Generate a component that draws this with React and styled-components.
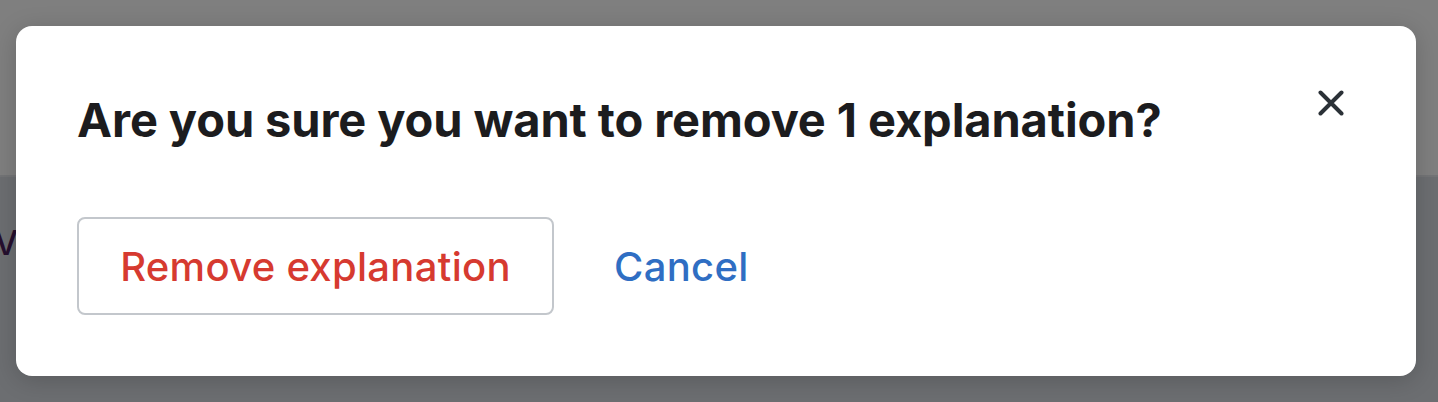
import styled, { createGlobalStyle } from "styled-components";

const GlobalStyle = createGlobalStyle`
  html, body {
    margin: 0;
    padding: 0;
    width: 100%;
    height: 100%;
    overflow: hidden;
  }
  #root {
    height: 100%;
  }
`;

const Page = styled.div`
  position: relative;
  width: 100%;
  height: 100%;
  display: flex;
  flex-direction: column;
  background: #d9dce3;
  font-family: Inter, "Liberation Sans", sans-serif;
`;

const PageHeader = styled.div`
  height: 175px;
  background: #ffffff;
  border-bottom: 2px solid #e6e8ec;
`;

const PageBody = styled.div`
  flex: 1;
  padding-top: 46px;
`;

const PeekLetter = styled.span`
  display: block;
  margin-left: -6px;
  font-size: 34px;
  line-height: 40px;
  font-weight: 500;
  color: #4a1f5c;
`;

const Overlay = styled.div`
  position: absolute;
  inset: 0;
  background: rgba(0, 0, 0, 0.5);
  padding: 26px 22px 26px 16px;
`;

const Dialog = styled.div`
  position: relative;
  background: #ffffff;
  border-radius: 16px;
  box-shadow: 0 4px 24px rgba(0, 0, 0, 0.18);
  padding: 66px 62px 60px 61px;
  height: 350px;
  box-sizing: border-box;
  display: flex;
  flex-direction: column;
`;

const Title = styled.h2`
  margin: 0;
  font-size: 47px;
  line-height: 56px;
  font-weight: 700;
  color: #1c1c1e;
  letter-spacing: -0.1px;
`;

const CloseButton = styled.button`
  position: absolute;
  top: 62px;
  right: 70px;
  width: 30px;
  height: 30px;
  padding: 0;
  border: none;
  background: none;
  display: flex;
  align-items: center;
  justify-content: center;
  cursor: pointer;
`;

const Actions = styled.div`
  display: flex;
  align-items: center;
  gap: 60px;
  margin-top: 69px;
`;

const OutlineButton = styled.button`
  height: 98px;
  width: 477px;
  border: 2px solid #c3c7cc;
  border-radius: 8px;
  background: #ffffff;
  color: ${(p) => p.color};
  font-family: Inter, "Liberation Sans", sans-serif;
  font-size: 40px;
  font-weight: 500;
  letter-spacing: 0.3px;
  cursor: pointer;
`;

const TextButton = styled.button`
  border: none;
  background: none;
  padding: 0;
  color: ${(p) => p.color};
  font-family: Inter, "Liberation Sans", sans-serif;
  font-size: 40px;
  font-weight: 500;
  letter-spacing: 0.3px;
  cursor: pointer;
`;

export default function App() {
  return (
    <>
      <GlobalStyle />
      <Page>
        <PageHeader />
        <PageBody>
          <PeekLetter>V</PeekLetter>
        </PageBody>
        <Overlay>
          <Dialog>
            <Title>Are you sure you want to remove 1 explanation?</Title>
            <CloseButton aria-label="Close">
              <svg width="26" height="26" viewBox="0 0 26 26">
                <path
                  d="M2.5 2.5 L23.5 23.5 M23.5 2.5 L2.5 23.5"
                  stroke="#2b3137"
                  strokeWidth="4"
                  strokeLinecap="round"
                />
              </svg>
            </CloseButton>
            <Actions>
              <OutlineButton color="#d63a30">Remove explanation</OutlineButton>
              <TextButton color="#2f6ec3">Cancel</TextButton>
            </Actions>
          </Dialog>
        </Overlay>
      </Page>
    </>
  );
}
